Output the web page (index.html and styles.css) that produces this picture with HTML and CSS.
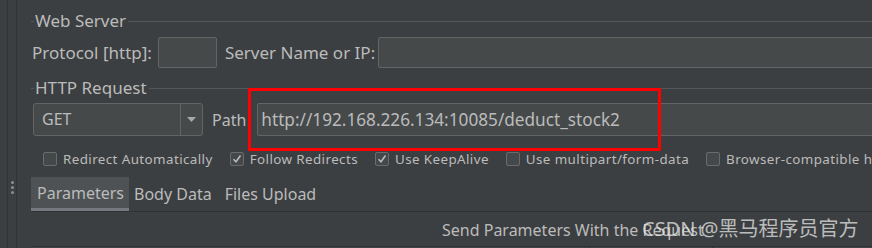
FILE: index.html
```html
<!DOCTYPE html>
<html lang="en">
<head>
    <meta charset="UTF-8">
    <title>HTTP Request</title>
    <link rel="stylesheet" href="styles.css">
</head>
<body>

    <div class="app">
        <div class="gutter">
            <div class="gutter-line"></div>
            <div class="grip">
                <span></span><span></span><span></span>
            </div>
            <div class="gutter-line"></div>
        </div>

        <div class="main">
            <div class="legend legend-first"><span>Web Server</span></div>
            <div class="row row-server">
                <label class="label">Protocol [http]:</label>
                <div class="field field-protocol"></div>
                <label class="label label-server">Server Name or IP:</label>
                <div class="field field-grow"></div>
            </div>

            <div class="legend legend-second"><span>HTTP Request</span></div>
            <div class="row row-request">
                <div class="combo">
                    <div class="combo-value">GET</div>
                    <div class="combo-arrow">
                        <svg width="9" height="5" viewBox="0 0 9 5"><path d="M0 0H9L4.5 5Z" fill="#a9a9a9"/></svg>
                    </div>
                </div>
                <label class="label label-path">Path</label>
                <div class="field field-path">http://192.168.226.134:10085/deduct_stock2</div>
                <div class="highlight"></div>
            </div>

            <div class="checks">
                <div class="check"><span class="box"></span>Redirect Automatically</div>
                <div class="check"><span class="box checked"><svg width="12" height="12" viewBox="0 0 12 12"><path d="M2.5 6.2L5 8.8L9.5 2.5" fill="none" stroke="#b9b9b9" stroke-width="1.6"/></svg></span>Follow Redirects</div>
                <div class="check"><span class="box checked"><svg width="12" height="12" viewBox="0 0 12 12"><path d="M2.5 6.2L5 8.8L9.5 2.5" fill="none" stroke="#b9b9b9" stroke-width="1.6"/></svg></span>Use KeepAlive</div>
                <div class="check"><span class="box"></span>Use multipart/form-data</div>
                <div class="check"><span class="box"></span>Browser-compatible headers</div>
            </div>

            <div class="tabs">
                <div class="tab active">Parameters</div>
                <div class="tab tab-body">Body Data</div>
                <div class="tab">Files Upload</div>
            </div>

            <div class="send-row">Send Parameters With the Request</div>

            <div class="table-head">
                <div class="col col-name"></div>
                <div class="col col-value"></div>
                <div class="col col-rest"></div>
            </div>
        </div>
    </div>

    <div class="watermark">CSDN @黑马程序员官方</div>

</body>
</html>
```

FILE: styles.css
```css
body, html {
    margin: 0;
    padding: 0;
    width: 872px;
    height: 248px;
    overflow: hidden;
    background-color: #3c3f41;
    color: #bbbbbb;
    font-family: "Noto Sans", "Open Sans", sans-serif;
}

.app {
    display: flex;
    height: 248px;
    position: relative;
}

.gutter {
    width: 31px;
    display: flex;
    flex-shrink: 0;
    padding-left: 7px;
    box-sizing: border-box;
}

.gutter-line {
    width: 1px;
    height: 100%;
    background-color: #313335;
}

.grip {
    width: 8px;
    display: flex;
    flex-direction: column;
    align-items: center;
    gap: 2px;
    padding-top: 181px;
}

.grip span {
    width: 3px;
    height: 3px;
    border-radius: 50%;
    background-color: #8c8f91;
}

.main {
    flex: 1;
    min-width: 0;
    overflow: hidden;
    display: flex;
    flex-direction: column;
}

.legend {
    height: 20px;
    display: flex;
    align-items: center;
    font-size: 17px;
}

.legend::before {
    content: "";
    width: 3px;
    height: 1px;
    background-color: #53575a;
}

.legend::after {
    content: "";
    flex: 1;
    height: 1px;
    background-color: #53575a;
}

.legend span {
    padding: 0 2px 2px 1px;
}

.legend-first {
    margin-top: 11px;
}

.legend-second {
    margin-top: 10px;
}

.row {
    display: flex;
    align-items: center;
}

.label {
    font-size: 17px;
    white-space: nowrap;
}

.row-server {
    margin-top: 6px;
    height: 31px;
}

.row-server .label:first-child {
    margin-left: 1px;
}

.field {
    height: 31px;
    box-sizing: border-box;
    border: 1px solid #646464;
    border-radius: 2px;
    background-color: #45494a;
}

.field-protocol {
    width: 59px;
    margin-left: 6px;
    flex-shrink: 0;
}

.label-server {
    margin-left: 8px;
}

.field-grow {
    flex: 1;
    margin-left: 3px;
    margin-right: -4px;
}

.row-request {
    margin-top: 5px;
    height: 33px;
    position: relative;
}

.combo {
    width: 170px;
    height: 33px;
    margin-left: 2px;
    flex-shrink: 0;
    box-sizing: border-box;
    border: 1px solid #646464;
    border-radius: 3px;
    background-color: #45494a;
    display: flex;
}

.combo-value {
    flex: 1;
    padding-left: 8px;
    font-size: 16px;
    line-height: 31px;
    border-right: 1px solid #646464;
}

.combo-arrow {
    width: 21px;
    display: flex;
    align-items: center;
    justify-content: center;
}

.label-path {
    margin-left: 9px;
    font-size: 16px;
}

.field-path {
    flex: 1;
    height: 33px;
    margin-left: 11px;
    margin-right: -4px;
    padding-left: 3px;
    font-size: 17.2px;
    line-height: 31px;
    white-space: nowrap;
}

.highlight {
    position: absolute;
    left: 217px;
    top: -15px;
    width: 413px;
    height: 63px;
    box-sizing: border-box;
    border: 3px solid #ff0000;
}

.checks {
    margin-top: 14px;
    height: 18px;
    display: flex;
    align-items: center;
    white-space: nowrap;
    font-size: 13.4px;
    letter-spacing: 0.4px;
    padding-left: 12px;
}

.check {
    display: flex;
    align-items: center;
    margin-right: 17px;
}

.box {
    width: 14px;
    height: 14px;
    box-sizing: border-box;
    border: 1px solid #6b6b6b;
    border-radius: 2px;
    background-color: #43494a;
    margin-right: 6px;
    display: flex;
    align-items: center;
    justify-content: center;
}

.tabs {
    margin-top: 9px;
    height: 34px;
    display: flex;
    border-bottom: 1px solid #323232;
}

.tab {
    padding: 0 5px;
    font-size: 16px;
    line-height: 34px;
    box-sizing: border-box;
    white-space: nowrap;
}

.tab.active {
    padding: 0 5px 0 6px;
    background-color: #4e5254;
    border-bottom: 3px solid #747a80;
    line-height: 33px;
}

.tab-body {
    padding-right: 8px;
}

.send-row {
    height: 34px;
    padding-left: 411px;
    font-size: 16px;
    line-height: 37px;
    white-space: nowrap;
}

.table-head {
    display: flex;
    height: 10px;
    background-color: #414446;
    border-top: 1px solid #323232;
}

.col {
    border-right: 1px solid #323232;
}

.col-name {
    width: 558px;
}

.col-value {
    width: 122px;
}

.col-rest {
    flex: 1;
    border-right: none;
}

.watermark {
    position: absolute;
    left: 642px;
    top: 213px;
    font-size: 20px;
    color: rgba(230, 230, 230, 0.75);
    white-space: nowrap;
    font-family: "Noto Sans", "Noto Sans CJK SC", sans-serif;
}
```
